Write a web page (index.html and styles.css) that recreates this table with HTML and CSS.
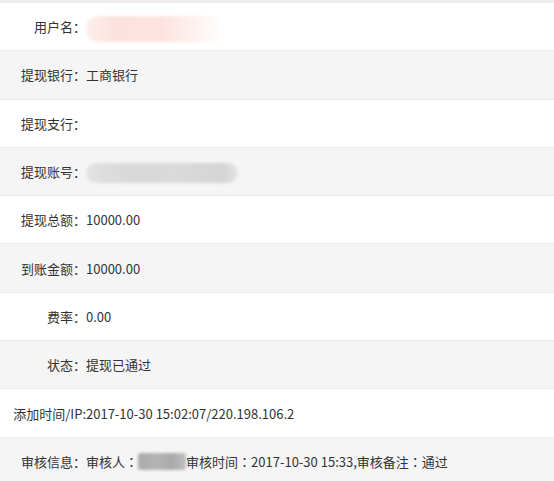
FILE: index.html
```html
<!DOCTYPE html>
<html lang="zh-CN">
<head>
  <meta charset="UTF-8">
  <title>提现详情</title>
  <link rel="stylesheet" href="styles.css">
</head>
<body>
  <!-- 提现详情 -->
  <div class="detail">
    <div class="row">
      <span class="label">用户名<i class="colon">：</i></span>
      <span class="value"><span class="mask mask-name"></span></span>
    </div>
    <div class="row">
      <span class="label">提现银行<i class="colon">：</i></span>
      <span class="value">工商银行</span>
    </div>
    <div class="row">
      <span class="label">提现支行<i class="colon">：</i></span>
      <span class="value"></span>
    </div>
    <div class="row">
      <span class="label">提现账号<i class="colon">：</i></span>
      <span class="value"><span class="mask mask-account"></span></span>
    </div>
    <div class="row">
      <span class="label">提现总额<i class="colon">：</i></span>
      <span class="value">10000.00</span>
    </div>
    <div class="row">
      <span class="label">到账金额<i class="colon">：</i></span>
      <span class="value">10000.00</span>
    </div>
    <div class="row">
      <span class="label">费率<i class="colon">：</i></span>
      <span class="value">0.00</span>
    </div>
    <div class="row">
      <span class="label">状态<i class="colon">：</i></span>
      <span class="value">提现已通过</span>
    </div>
    <div class="row">
      <span class="label">添加时间/IP:</span>
      <span class="value">2017-10-30 15:02:07/220.198.106.2</span>
    </div>
    <div class="row">
      <span class="label">审核信息<i class="colon">：</i></span>
      <span class="value">审核人<i class="colon">：</i><span class="mask mask-auditor"></span>审核时间<i class="colon">：</i>2017-10-30 15:33,审核备注<i class="colon">：</i>通过</span>
    </div>
  </div>
</body>
</html>
```

FILE: styles.css
```css
* {
  margin: 0;
  padding: 0;
  box-sizing: border-box;
}

html, body {
  background: #fff;
  font-family: "Noto Sans CJK SC", "Noto Sans", sans-serif;
  font-size: 13px;
  color: #333;
  overflow: hidden;
}

.detail {
  border-top: 3px solid #f0f0f0;
}

.row {
  display: flex;
  align-items: center;
  height: 48.3px;
  border-bottom: 1px solid #ececec;
  white-space: nowrap;
}

.row:nth-child(even) {
  background: #f5f5f5;
}

.label {
  width: 86px;
  text-align: right;
  flex-shrink: 0;
}

.value {
  display: flex;
  align-items: center;
}

/* 冒号居中 */
.colon {
  font-style: normal;
  font-family: "Noto Sans CJK TC", "Noto Sans CJK SC", sans-serif;
}

/* 打码区域 */
.mask {
  display: inline-block;
  border-radius: 12px;
  filter: blur(1.5px);
}

.mask-name {
  width: 140px;
  height: 26px;
  margin-top: 4px;
  background: linear-gradient(to right, #fdeeec 0%, #fce2df 20%, #fde3e0 55%, #fdf0ee 75%, #fff 100%);
}

.mask-account {
  width: 152px;
  height: 20px;
  margin-top: 2px;
  background: linear-gradient(to right, #e2e2e2 0%, #d8d8d8 30%, #dadada 60%, #d4d4d4 90%, #e4e4e4 100%);
}

.mask-auditor {
  width: 48px;
  height: 17px;
  border-radius: 3px;
  background: linear-gradient(to right, #ababab 0%, #b4b4b4 40%, #a9a9a9 70%, #bfbfbf 100%);
}
```
